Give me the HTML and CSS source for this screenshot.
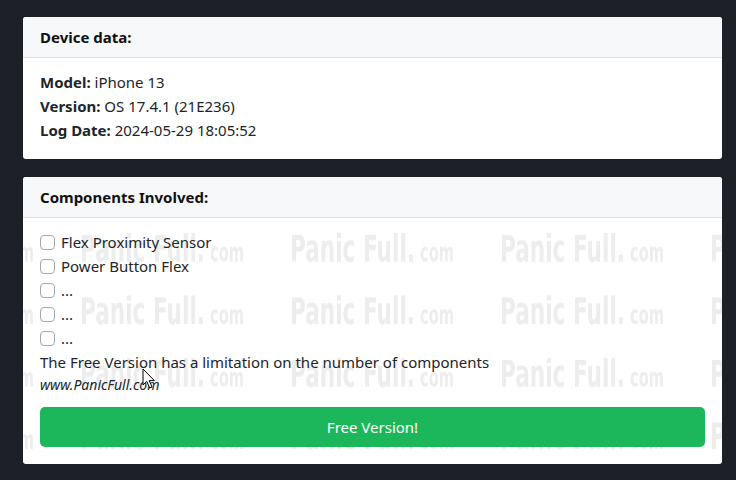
FILE: index.html
```html
<!DOCTYPE html>
<html lang="en">
<head>
<meta charset="utf-8">
<title>Panic Full</title>
<link rel="stylesheet" href="styles.css">
</head>
<body>
<main class="page">
  <section class="card card-device">
    <header class="card-header">Device data:</header>
    <div class="card-body">
      <div class="line"><b>Model:</b> iPhone 13</div>
      <div class="line"><b>Version:</b> OS 17.4.1 (21E236)</div>
      <div class="line"><b>Log Date:</b> 2024-05-29 18:05:52</div>
    </div>
  </section>

  <section class="card card-components">
    <header class="card-header">Components Involved:</header>
    <div class="card-body watermarked">
      <svg class="watermark" aria-hidden="true" xmlns="http://www.w3.org/2000/svg">
        <defs>
          <pattern id="wm" x="-153" y="0" width="210" height="62.5" patternUnits="userSpaceOnUse">
            <text x="0" y="44" font-family="DejaVu Sans" font-weight="bold" font-size="37" textLength="125" lengthAdjust="spacingAndGlyphs" fill="#ededed">Panic Full.</text>
            <text x="130" y="44" font-family="DejaVu Sans" font-weight="bold" font-size="26" textLength="34" lengthAdjust="spacingAndGlyphs" fill="#ededed">com</text>
          </pattern>
        </defs>
        <rect x="0" y="0" width="100%" height="100%" fill="url(#wm)"/>
      </svg>
      <div class="content">
        <label class="check"><span class="box"></span>Flex Proximity Sensor</label>
        <label class="check"><span class="box"></span>Power Button Flex</label>
        <label class="check"><span class="box"></span>...</label>
        <label class="check"><span class="box"></span>...</label>
        <label class="check"><span class="box"></span>...</label>
        <p class="note">The Free Version has a limitation on the number of components</p>
        <p class="site">www.PanicFull.com</p>
        <button class="btn-free" type="button">Free Version!</button>
      </div>
    </div>
  </section>
</main>
<svg class="cursor" width="14" height="22" viewBox="0 0 14 22" aria-hidden="true">
  <path d="M1 1 L1 17 L4.8 13.4 L7.6 20 L10 19 L7.2 12.6 L12.4 12.6 Z" fill="#fff" stroke="#000" stroke-width="1" stroke-linejoin="round"/>
</svg>
</body>
</html>
```

FILE: styles.css
```css
html, body {
  margin: 0;
  padding: 0;
}
body {
  background: #1e2028;
  font-family: "Noto Sans", "Open Sans", "DejaVu Sans", sans-serif;
  font-size: 15px;
  color: #212529;
  width: 736px;
  height: 480px;
  overflow: hidden;
  position: relative;
}
.page {
  padding: 17px 14px 0 23px;
  display: flex;
  flex-direction: column;
  gap: 18px;
}
.card {
  background: #fff;
  border-radius: 3px;
  overflow: hidden;
}
.card-header {
  height: 40px;
  line-height: 40px;
  padding: 0 17px;
  background: #f7f8fa;
  border-bottom: 1px solid #dfe1e5;
  font-weight: bold;
  font-size: 15px;
  color: #111;
}
.card-body {
  padding: 12px 17px 17px;
}
.line {
  line-height: 24px;
}
.line b {
  font-weight: bold;
}
.watermarked {
  position: relative;
}
.watermark {
  position: absolute;
  left: 0;
  top: 0;
  width: 100%;
  height: 100%;
}
.content {
  position: relative;
  display: flex;
  flex-direction: column;
}
.check {
  display: flex;
  align-items: center;
  height: 24px;
  line-height: 24px;
}
.box {
  width: 13px;
  height: 13px;
  border: 1px solid #a3a6ab;
  border-radius: 4px;
  background: #fff;
  margin-right: 6px;
  flex: none;
}
.note {
  margin: 0;
  line-height: 24px;
}
.site {
  margin: 0;
  font-style: italic;
  font-size: 14px;
  line-height: 22px;
}
.btn-free {
  margin-top: 11px;
  height: 40px;
  border: 0;
  border-radius: 5px;
  background: #1db75b;
  color: #fff;
  font-family: inherit;
  font-size: 15px;
  cursor: pointer;
}
.cursor {
  position: absolute;
  left: 142px;
  top: 368px;
}
```
